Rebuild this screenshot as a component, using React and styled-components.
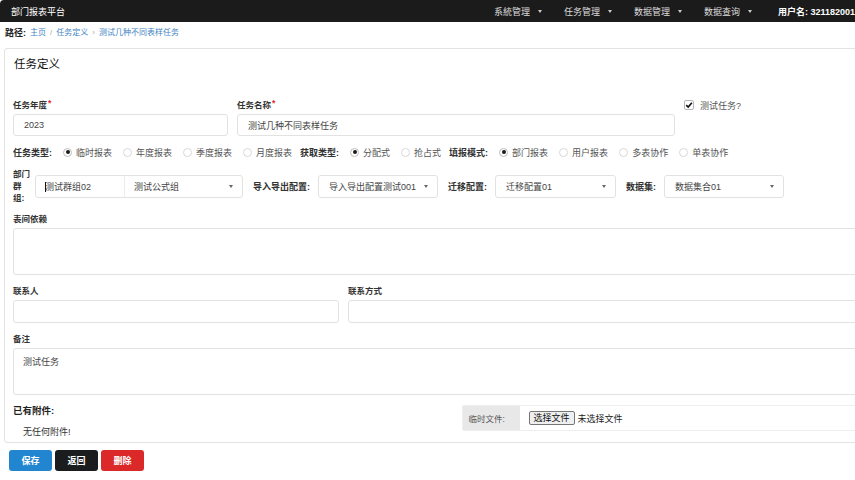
import React from 'react';
import styled, { createGlobalStyle } from 'styled-components';

const GlobalStyle = createGlobalStyle`
  html, body {
    margin: 0;
    padding: 0;
    background: #fff;
    overflow: hidden;
  }
  body {
    font-family: "Liberation Sans", "Noto Sans CJK SC", sans-serif;
    color: #333;
  }
`;

const radioGroups = [
  { label: '任务类型:', options: ['临时报表', '年度报表', '季度报表', '月度报表'], checked: 0 },
  { label: '获取类型:', options: ['分配式', '抢占式'], checked: 0 },
  { label: '填报模式:', options: ['部门报表', '用户报表', '多表协作', '单表协作'], checked: 0 },
];

const navItems = ['系統管理', '任务管理', '数据管理', '数据查询'];

const App = () => (
  <>
    <GlobalStyle />
    <Page>
      <NavBar>
        <Brand>部门报表平台</Brand>
        <Menu>
          {navItems.map(item => (
            <MenuItem key={item}>
              {item}
              <Caret $color="#ccc" />
            </MenuItem>
          ))}
          <UserItem>用户名: 321182001, 退出</UserItem>
        </Menu>
      </NavBar>

      <Crumbs>
        <CrumbLead>路径:</CrumbLead>
        <CrumbLink>主页</CrumbLink>
        <CrumbSep>/</CrumbSep>
        <CrumbLink>任务定义</CrumbLink>
        <CrumbSep>›</CrumbSep>
        <CrumbLink>测试几种不同表样任务</CrumbLink>
      </Crumbs>

      <Panel>
        <PanelTitle>任务定义</PanelTitle>

        <TopRow>
          <Field>
            <Label>任务年度<Req>*</Req></Label>
            <Input defaultValue="2023" readOnly />
          </Field>
          <Field>
            <Label>任务名称<Req>*</Req></Label>
            <Input defaultValue="测试几种不同表样任务" readOnly />
          </Field>
          <CheckWrap>
            <CheckBox>
              <svg width="8" height="8" viewBox="0 0 10 10">
                <path d="M1.5 5.2 L4 7.6 L8.6 2.2" fill="none" stroke="#111" strokeWidth="2" />
              </svg>
            </CheckBox>
            测试任务?
          </CheckWrap>
        </TopRow>

        <RadioRow>
          {radioGroups.map(group => (
            <React.Fragment key={group.label}>
              <GroupLabel>{group.label}</GroupLabel>
              {group.options.map((opt, i) => (
                <RadioOption key={opt}>
                  <RadioDot $checked={i === group.checked} />
                  {opt}
                </RadioOption>
              ))}
            </React.Fragment>
          ))}
        </RadioRow>

        <SelectRow>
          <DeptLabel>部门群组:</DeptLabel>
          <ChainSelect>
            <ChainPart>
              <TextCursor />
              测试群组02
            </ChainPart>
            <ChainPart $last>
              测试公式组
              <Caret $color="#666" />
            </ChainPart>
          </ChainSelect>
          <Pair>
            <GroupLabel>导入导出配置:</GroupLabel>
            <Select $w={120}>导入导出配置测试001<Caret $color="#666" /></Select>
          </Pair>
          <Pair>
            <GroupLabel>迁移配置:</GroupLabel>
            <Select $w={121}>迁移配置01<Caret $color="#666" /></Select>
          </Pair>
          <Pair>
            <GroupLabel>数据集:</GroupLabel>
            <Select $w={120}>数据集合01<Caret $color="#666" /></Select>
          </Pair>
        </SelectRow>

        <Field $mb={10}>
          <Label>表间依赖</Label>
          <TextArea readOnly defaultValue="" />
        </Field>

        <ContactRow>
          <Field>
            <Label>联系人</Label>
            <Input $h={23} readOnly defaultValue="" />
          </Field>
          <Field>
            <Label>联系方式</Label>
            <Input $h={23} readOnly defaultValue="" />
          </Field>
        </ContactRow>

        <Field $mb={10}>
          <Label>备注</Label>
          <TextArea readOnly defaultValue="测试任务" />
        </Field>

        <AttachRow>
          <div>
            <AttachTitle>已有附件:</AttachTitle>
            <AttachNote>无任何附件!</AttachNote>
          </div>
          <FileGroup>
            <FileAddon>临时文件:</FileAddon>
            <FileBody>
              <FileButton type="button">选择文件</FileButton>
              <FileHint>未选择文件</FileHint>
            </FileBody>
          </FileGroup>
        </AttachRow>
      </Panel>

      <Actions>
        <ActionButton $bg="#2185d0">保存</ActionButton>
        <ActionButton $bg="#1b1c1d">返回</ActionButton>
        <ActionButton $bg="#db2828">删除</ActionButton>
      </Actions>
    </Page>
  </>
);

const Page = styled.div`
  width: 910px;
`;

const NavBar = styled.header`
  display: flex;
  align-items: center;
  height: 22px;
  background: #1b1b1b;
  border-top-left-radius: 4px;
  padding: 0 0 0 11px;
`;

const Brand = styled.div`
  color: #fff;
  font-size: 9px;
`;

const Menu = styled.ul`
  display: flex;
  align-items: center;
  list-style: none;
  margin: 0 0 0 auto;
  padding: 0;
`;

const MenuItem = styled.li`
  display: flex;
  align-items: center;
  gap: 8px;
  padding: 0 11px;
  color: #ddd;
  font-size: 9px;
`;

const UserItem = styled.li`
  padding: 0 32px 0 15px;
  color: #fff;
  font-size: 9px;
  font-weight: bold;
  white-space: nowrap;
`;

const Caret = styled.span`
  display: inline-block;
  width: 0;
  height: 0;
  border-left: 2.5px solid transparent;
  border-right: 2.5px solid transparent;
  border-top: 3px solid ${props => props.$color};
`;

const Crumbs = styled.div`
  display: flex;
  align-items: center;
  gap: 4px;
  padding: 5px 0 0 5px;
  margin-bottom: 9px;
  line-height: 12px;
  font-size: 8px;
`;

const CrumbLead = styled.span`
  font-size: 9px;
  font-weight: bold;
  color: #222;
`;

const CrumbLink = styled.span`
  color: #4183c4;
`;

const CrumbSep = styled.span`
  color: #aaa;
`;

const Panel = styled.section`
  margin-left: 4px;
  border: 1px solid #e3e3e3;
  border-radius: 3px;
  padding: 8px 8px 4px;
`;

const PanelTitle = styled.h3`
  margin: 0 0 28px 1px;
  font-size: 11.5px;
  line-height: 14px;
  font-weight: normal;
  color: #111;
`;

const Field = styled.div`
  display: flex;
  flex-direction: column;
  margin-bottom: ${props => (props.$mb ? `${props.$mb}px` : '0')};
`;

const Label = styled.label`
  font-size: 8.5px;
  font-weight: bold;
  line-height: 12px;
  margin-bottom: 3px;
  color: #333;
`;

const Req = styled.span`
  color: #db2828;
  margin-left: 1px;
  position: relative;
  top: -2px;
`;

const Input = styled.input`
  box-sizing: border-box;
  height: ${props => props.$h || 22}px;
  width: 100%;
  border: 1px solid #e2e2e2;
  border-radius: 3px;
  padding: 0 10px;
  font-family: inherit;
  font-size: 9px;
  color: #444;
  outline: none;
`;

const TextArea = styled.textarea`
  box-sizing: border-box;
  height: 47px;
  width: 100%;
  border: 1px solid #e2e2e2;
  border-radius: 3px;
  padding: 6px 9px;
  font-family: inherit;
  font-size: 9px;
  color: #444;
  resize: none;
  outline: none;
  display: block;
`;

const TopRow = styled.div`
  display: grid;
  grid-template-columns: 215px 438px 1fr;
  column-gap: 9px;
  margin-bottom: 10px;
`;

const CheckWrap = styled.div`
  display: flex;
  align-items: center;
  gap: 6px;
  height: 12px;
  font-size: 9px;
  color: #555;
`;

const CheckBox = styled.span`
  box-sizing: border-box;
  display: flex;
  align-items: center;
  justify-content: center;
  width: 10px;
  height: 10px;
  border: 1px solid #b5b5b5;
  border-radius: 2px;
`;

const RadioRow = styled.div`
  display: flex;
  align-items: center;
  height: 12px;
  margin-bottom: 10px;
  font-size: 9px;
  color: #555;
`;

const GroupLabel = styled.span`
  font-size: 9px;
  font-weight: bold;
  color: #333;
  white-space: nowrap;
  & + span {
    margin-left: 11px;
  }
  span + & {
    margin-left: 8px;
  }
`;

const RadioOption = styled.span`
  display: flex;
  align-items: center;
  gap: 4px;
  white-space: nowrap;
  & + & {
    margin-left: 11px;
  }
`;

const RadioDot = styled.span`
  box-sizing: border-box;
  position: relative;
  width: 9px;
  height: 9px;
  border-radius: 50%;
  border: 1px solid ${props => (props.$checked ? '#bdbdbd' : '#d8d8d8')};
  background: #fff;
  &::after {
    content: '';
    display: ${props => (props.$checked ? 'block' : 'none')};
    position: absolute;
    left: 1.5px;
    top: 1.5px;
    width: 4px;
    height: 4px;
    border-radius: 50%;
    background: #1b1b1b;
  }
`;

const SelectRow = styled.div`
  display: flex;
  align-items: center;
  gap: 10px;
  height: 36px;
  margin-bottom: 9px;
`;

const DeptLabel = styled.span`
  width: 18px;
  margin-right: -6px;
  font-size: 8.5px;
  font-weight: bold;
  line-height: 12px;
  color: #333;
`;

const ChainSelect = styled.div`
  box-sizing: border-box;
  display: flex;
  width: 208px;
  height: 23px;
  border: 1px solid #e2e2e2;
  border-radius: 3px;
`;

const ChainPart = styled.div`
  position: relative;
  display: flex;
  align-items: center;
  justify-content: space-between;
  box-sizing: border-box;
  padding: 0 9px;
  font-size: 9px;
  color: #444;
  ${props =>
    props.$last
      ? 'flex: 1;'
      : 'width: 89px; border-right: 1px solid #ececec;'}
`;

const TextCursor = styled.span`
  position: absolute;
  left: 9px;
  top: 6px;
  width: 1px;
  height: 10px;
  background: #111;
`;

const Pair = styled.div`
  display: flex;
  align-items: center;
  gap: 8px;
`;

const Select = styled.div`
  box-sizing: border-box;
  display: flex;
  align-items: center;
  justify-content: space-between;
  width: ${props => props.$w}px;
  height: 23px;
  padding: 0 9px 0 10px;
  border: 1px solid #e2e2e2;
  border-radius: 3px;
  font-size: 9px;
  color: #444;
  white-space: nowrap;
`;

const ContactRow = styled.div`
  display: grid;
  grid-template-columns: 326px 1fr;
  column-gap: 9px;
  margin-bottom: 10px;
`;

const AttachRow = styled.div`
  display: grid;
  grid-template-columns: 1fr 1fr;
  column-gap: 9px;
`;

const AttachTitle = styled.div`
  font-size: 9.5px;
  font-weight: bold;
  line-height: 12px;
  color: #222;
`;

const AttachNote = styled.div`
  margin-top: 9px;
  padding-left: 10px;
  font-size: 9px;
  line-height: 12px;
  color: #333;
`;

const FileGroup = styled.div`
  box-sizing: border-box;
  display: flex;
  height: 26px;
  border: 1px solid #eee;
  border-radius: 2px;
`;

const FileAddon = styled.div`
  display: flex;
  align-items: center;
  width: 57px;
  padding-left: 6px;
  box-sizing: border-box;
  background: #e8e8e8;
  font-size: 8.5px;
  color: #555;
`;

const FileBody = styled.div`
  display: flex;
  align-items: center;
  padding-left: 9px;
`;

const FileButton = styled.button`
  height: 14px;
  padding: 0 4px;
  border: 1px solid #767676;
  border-radius: 2px;
  background: #efefef;
  font-family: inherit;
  font-size: 9px;
  line-height: 12px;
  color: #111;
`;

const FileHint = styled.span`
  margin-left: 3px;
  font-size: 9px;
  color: #222;
`;

const Actions = styled.div`
  display: flex;
  gap: 3px;
  margin: 7px 0 0 9px;
`;

const ActionButton = styled.button`
  width: 43px;
  height: 21px;
  border: none;
  border-radius: 3px;
  background: ${props => props.$bg};
  color: #fff;
  font-family: inherit;
  font-size: 9px;
  font-weight: bold;
  padding: 0;
`;

export default App;
